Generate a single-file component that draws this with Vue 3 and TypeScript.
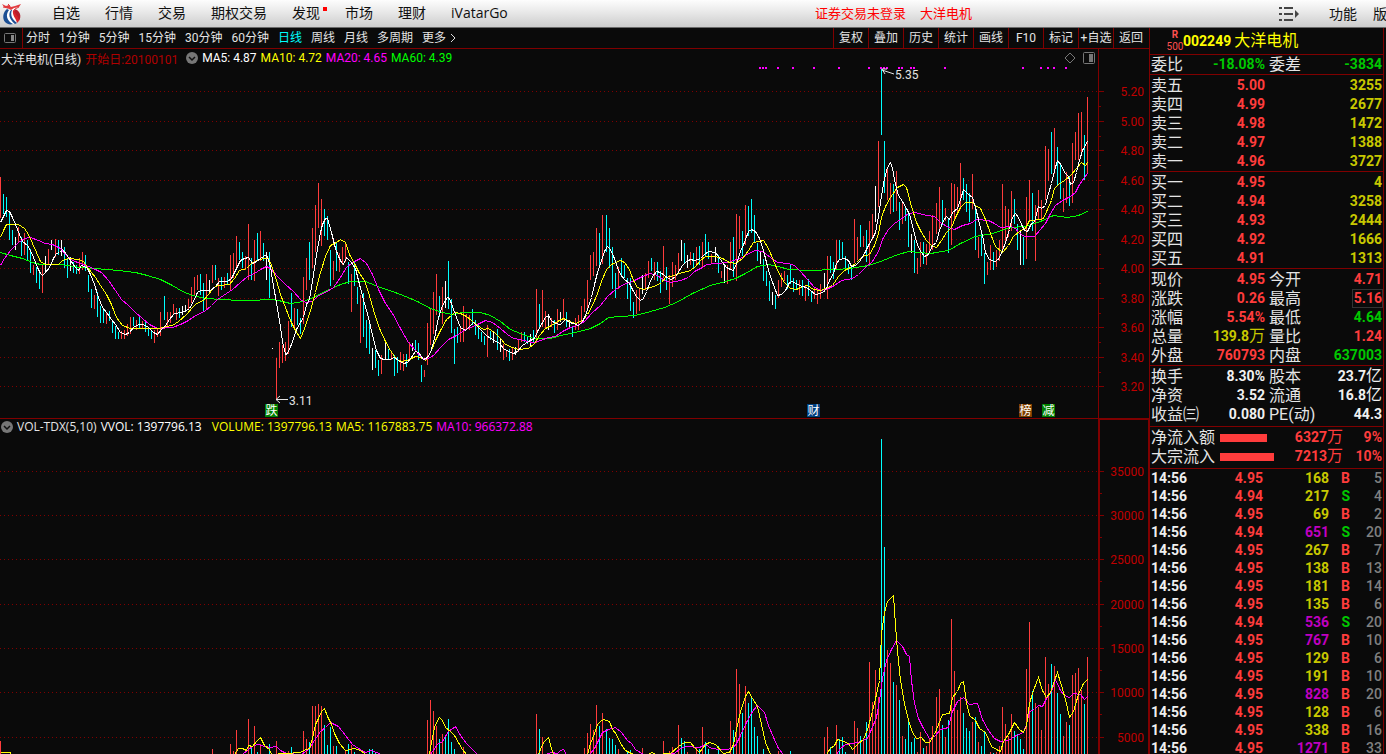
<script setup lang="ts">
type Tone = 'red' | 'green' | 'yellow' | 'purple' | 'white' | 'gray'
interface Bar { x: number; top: number; bottom: number; tone: string }

const navItems = ['自选', '行情', '交易', '期权交易', '发现', '市场', '理财', 'iVatarGo']
const periods = ['分时', '1分钟', '5分钟', '15分钟', '30分钟', '60分钟', '日线', '周线', '月线', '多周期']
const tools = ['复权', '叠加', '历史', '统计', '画线', 'F10', '标记', '+自选', '返回']

/* Daily bars: each run starts at x and advances three units per day; c = fall, r = rise, w = flat */
const runs: [number, string][] = [
  [0, 'r177-218 c194-214 c197-217 c211-240 c230-245 w237-250 r227-242 c237-256 r233-255 c240-260 c249-273 r265-275 c267-283 c272-289 r264-293 w256-272 r249-265 w240-250'],
  [55, 'r239-257 c240-255 w240-256 c247-268 c258-278 w257-271 c262-273 c265-274 r258-274 r252-270 c255-271 c275-292 c289-308 r295-309 c292-317 c306-323 c308-323 r312-324 c311-321 c321-333 c326-339 c332-339 r331-339 r330-339 r324-336 r317-334 c317-326 r320-330 c315-329 r321-329 c322-332 c327-336 c331-339 r330-343 r328-337 r312-336'],
  [164, 'c296-320 r312-326 r312-323 r304-314 r308-320 c308-318 w306-315 w305-312 r299-310 r287-303 r277-295 r275-290 c274-295 c283-311 r274-310 w280-293 r265-283 c265-280 r278-296 c277-290 r277-288 c273-284 r255-290 r253-278 r236-269 c242-260 c252-268 r256-270 r224-280 c258-280 r240-281 c233-260 r231-261 c243-261 w252-280 c252-298 w348-349'],
  [276, 'r358-399 r342-368 r345-363 r342-361 r321-354 c293-327 r308-330 c309-325 c318-334 r277-324 r258-290 c242-280 r228-268 r205-252 r183-228 r199-246 c209-236 c216-240 c250-286 r261-280 c243-271 r253-272 r247-265 r243-262 c262-284 r274-312 c262-286 c287-304 r295-343 c293-337 c320-348 c321-354 w348-370 c350-368 c360-376 r355-374'],
  [385, 'w342-359 c349-360 r352-360 c355-376 c357-373 r352-370 r354-371 c354-367 r342-360 w343-351 c340-350 c343-360 c365-382 r370-377 r323-365 r308-345 r292-334 r274-315 c296-317 r287-324 w281-308 c261-309 c299-333 c329-364 c327-343 r328-342 r306-342 r314-330 r315-330 c309-325 c320-335 c325-339 c332-342 c336-345 r325-357 c331-340 w332-343'],
  [497, 'c329-350 w338-352 r344-360 r350-357 c349-361 r347-360 w347-355 r340-352 r332-342 c332-342 c336-344 w334-346 c330-342 r289-343 c304-328 r290-327 r311-329 w314-330 r318-327 c320-333 r309-330 w312-322 r299-320 c312-327 w320-327 c326-337 r318-330 r315-330 r306-323 r299-312 r280-310 r255-280 r252-276 r228-266 c233-267 r215-264'],
  [606, 'c215-252 c228-268 c247-289 c273-298 r267-289 c258-277 c265-278 c278-299 c278-311 c302-318 r290-314 r288-311 w275-294 r273-290 r261-278 c258-271 r262-280 c262-281 c271-293 r246-278 c267-290 r275-304 r262-287 r265-280 r253-273 w240-261 c243-264 w255-268 r252-265 c253-268 r247-264 c246-265 r242-268 c234-257 c242-259 r254-264'],
  [715, 'w247-262 c255-273 r271-278 w266-283 r265-284 r242-270 c237-277 r214-281 r216-249 c231-256 r205-245 c206-236 c199-233 c215-242 c243-261 w252-264 c259-281 c271-286 c281-301 w292-305 c295-309 r280-298 r273-287 r271-281 c275-289 c265-284 c278-292 c280-290 r280-295 c280-296 r285-301 c279-296 c291-302 r287-299 r288-304 r284-299'],
  [824, 'w273-291 r256-299 c256-273 c262-279 r240-269 c240-260 c242-259 c256-269 c264-274 c267-280 r219-263 r237-260 c225-247 r236-247 c230-262 r221-264 r214-240 w186-222 r141-207 c68-135 c141-193 r169-200 r183-214 c184-212 r171-211 c202-230 r202-224 c206-221 c212-247 w234-253 c240-273 r258-274 r242-267 c242-264 r244-265 r231-253 r215-250'],
  [936, 'r203-234 r187-232 c200-225 r208-221 c218-253 r183-245 r184-221 r187-215 r163-207 c178-200 c184-212 c193-222 r174-209 c206-250 r237-258 c232-256 c253-284 r262-275 r245-270 c252-270 r250-267 r240-261 r184-253 r206-243 r209-237 r191-231 c199-224 c224-250 w230-265 c237-265 r197-259 r180-221 c193-231 r205-261 r190-220 r200-219'],
  [1045, 'r146-200 r149-181 c132-174 r128-174 c147-185 c164-199 r188-212 r172-203 c176-206 r143-203 r132-160 r113-160 r112-152 c135-180 r97-174'],
]
const priceBars: Bar[] = runs.flatMap(([x, text]) =>
  text.split(' ').map((t, i) => {
    const [top, bottom] = t.slice(1).split('-').map(Number)
    return { x: x + i * 3, top, bottom, tone: t[0] }
  }))

const volumeText = 'r0:741 r212:749 r230:744 r233:751 r236:730 r248:719 c251:748 r254:726 c257:752 r260:744 c269:744 r276:741 r288:751 c291:747 r303:731 r306:739 c309:742 r312:706 r315:706 r318:704 r321:706 c324:725 c327:745 c330:727 r333:746 c336:746 r345:751 c348:744 r351:745 c354:752 c369:749 c372:749 c375:752 r427:720 r430:700 r433:711 r436:726 c439:739 r442:734 c445:737 c448:719 c451:742 c454:749 r463:747 r536:714 c539:729 r542:737 r584:748 r587:733 r590:724 r593:730 r596:705 c599:726 r602:713 c606:729 c609:738 c612:739 c615:745 r618:749 c627:752 c630:750 r642:748 r663:741 r669:751 r672:747 r678:725 c681:738 c684:741 r687:752 r696:747 c699:749 r702:727 c705:742 c708:749 c718:746 r730:721 c733:730 r736:669 r739:684 c742:713 r745:686 c748:703 c751:696 c754:727 c757:736 c763:749 r778:751 c790:751 r824:737 r827:727 c830:747 r836:725 c839:739 c842:737 c845:752 r854:721 r857:728 c860:736 r863:739 c866:722 r869:662 r872:702 r875:670 r878:697 c881:439 c884:547 r887:650 r890:663 c893:682 r896:685 c899:700 r902:736 c905:739 c908:719 c911:742 c914:738 r917:752 r920:732 c923:748 r926:746 r929:739 r932:726 r936:697 r939:689 c942:725 r945:737 c948:720 r951:619 r954:671 r957:710 r960:697 c963:713 c966:728 c969:731 r972:722 c975:717 r978:742 c981:746 c984:731 r990:752 c993:753 r996:752 r999:746 r1002:707 r1005:724 r1008:736 r1011:714 c1014:731 c1017:734 c1020:739 c1023:749 r1026:669 r1029:622 c1032:691 r1035:703 r1038:707 r1041:730 r1045:657 r1048:684 c1051:664 r1054:666 c1057:693 c1060:714 r1063:736 r1066:722 c1069:725 r1072:675 r1075:673 r1078:668 r1081:690 c1084:704 r1087:657'
const volumeBars: Bar[] = volumeText.split(' ').map(t => {
  const [x, top] = t.slice(1).split(':').map(Number)
  return { x, top, bottom: 756, tone: t[0] }
})

const priceLines = [
  { tone: 'ma60', points: '0,252 10,255 22,258 32,262 40,264 60,264 80,267 95,268 118,270 135,272 147,275 160,279 172,285 182,291 192,295 205,298 222,299 238,300 250,300 270,299 278,300 290,303 303,301 315,296 327,290 340,284 350,281 365,281 380,287 392,291 405,296 417,301 430,308 442,312 452,314 462,312 480,312 490,315 500,321 510,329 520,333 533,338 550,338 560,335 575,332 590,328 600,323 608,317 620,316 635,315 650,311 664,307 678,301 692,293 710,285 725,281 735,278 745,273 757,266 768,264 778,266 788,269 808,270 835,269 850,268 868,265 880,261 895,255 908,251 930,253 948,250 960,243 975,236 992,233 1010,227 1025,226 1040,221 1053,215 1067,217 1078,215 1087,211' },
  { tone: 'ma20', points: '0,265 4,258 10,250 18,242 24,238 30,237 38,240 45,243 52,244 60,248 66,255 72,260 80,263 88,266 95,269 101,272 108,280 115,290 121,299 128,305 135,312 142,318 149,324 157,328 172,327 180,324 188,320 195,315 204,311 211,305 217,299 223,295 232,289 240,282 247,276 254,273 260,269 266,266 270,268 277,276 285,284 293,291 300,299 305,302 312,301 318,295 325,292 333,287 340,277 346,267 352,262 360,258 366,263 372,274 378,289 385,303 392,313 400,328 408,342 415,350 422,358 426,359 433,355 440,347 448,339 456,335 465,329 475,325 485,320 492,322 500,328 507,334 513,338 520,339 527,341 533,342 540,340 548,337 555,336 562,331 570,327 577,325 584,321 592,312 600,305 607,296 615,289 623,284 632,281 642,276 650,273 657,275 664,280 670,282 680,280 688,277 694,271 702,267 706,264 716,263 728,262 733,260 740,258 748,253 755,250 762,251 770,257 777,262 788,263 794,265 800,271 808,280 814,287 821,290 828,288 834,285 841,280 852,278 858,274 866,266 872,261 878,251 882,239 888,229 894,223 900,219 908,213 915,212 926,215 934,216 940,222 948,227 954,229 962,225 970,223 976,219 988,220 994,223 1000,227 1010,226 1015,228 1018,232 1024,236 1034,236 1040,229 1045,223 1050,213 1055,205 1062,200 1070,196 1075,192 1079,184 1084,177 1087,173' },
  { tone: 'ma10', points: '0,237 3,230 6,224 18,224 24,228 28,234 32,243 36,252 40,261 45,264 58,264 62,260 68,258 78,259 83,261 87,267 91,272 95,277 100,285 106,294 111,304 116,317 122,325 130,328 150,328 159,328 166,326 172,325 178,321 186,314 192,307 196,303 203,300 208,294 213,287 218,285 229,284 234,278 239,270 246,268 251,263 257,260 263,258 268,258 271,265 276,280 280,294 285,307 290,320 295,330 300,338 304,328 310,310 315,292 320,272 325,256 330,245 336,242 340,239 345,242 349,254 354,263 359,273 364,280 368,292 374,313 379,328 385,341 390,350 396,359 402,361 409,359 415,356 420,357 425,360 430,352 435,340 440,330 446,319 451,315 454,312 460,313 466,316 471,320 477,325 483,329 488,328 494,332 500,338 505,344 512,347 518,349 528,348 534,343 539,335 545,328 551,325 557,321 563,318 569,321 575,323 582,320 587,314 592,305 597,293 601,281 606,269 611,264 620,260 624,262 629,269 633,280 637,287 643,289 650,287 656,285 661,282 665,277 670,276 676,274 682,272 688,271 694,267 700,260 705,256 715,256 722,258 729,262 735,263 742,258 748,250 753,242 759,241 763,240 768,248 773,260 778,272 784,282 790,288 796,289 802,286 807,285 813,289 820,290 827,287 832,285 838,276 844,270 850,267 856,262 862,256 869,254 874,245 878,233 881,217 885,206 890,197 897,187 903,184 906,187 911,206 916,222 921,232 926,240 931,245 936,247 941,240 946,232 951,227 955,217 960,207 965,202 972,202 975,205 980,208 985,219 990,233 995,246 1002,252 1008,245 1013,236 1020,230 1025,228 1029,220 1040,219 1043,218 1047,209 1051,200 1054,188 1058,184 1064,180 1070,175 1076,168 1081,162 1085,165 1087,162' },
  { tone: 'ma5', points: '0,222 6,210 9,211 12,217 15,224 19,234 22,241 27,245 30,250 33,257 37,267 40,273 42,275 45,272 49,267 53,258 56,253 59,252 62,249 66,254 70,260 75,267 78,270 81,265 84,266 87,268 90,274 94,284 98,297 102,307 106,312 111,319 115,324 120,332 125,334 129,332 133,327 138,324 143,324 148,327 153,332 157,334 161,329 165,325 169,319 174,313 181,312 186,310 189,308 193,301 197,292 200,290 210,290 215,286 219,281 227,281 231,278 236,268 240,260 244,258 248,257 252,263 256,261 260,258 266,254 270,266 273,286 276,302 280,327 282,341 285,354 287,353 291,344 296,329 300,322 303,317 306,304 309,299 312,281 316,254 320,232 322,224 325,218 327,218 331,232 335,248 338,256 341,262 343,264 346,257 350,261 355,268 360,288 364,303 368,317 372,335 376,350 380,358 384,359 389,359 394,357 398,360 403,363 407,362 410,358 415,351 418,352 423,359 427,357 430,352 434,338 438,317 441,308 444,301 447,297 449,298 452,306 456,317 460,327 465,330 469,326 473,322 477,326 482,331 487,336 494,340 499,343 503,348 508,351 513,353 517,351 522,345 528,341 534,338 537,331 541,324 545,317 548,315 551,320 555,323 560,324 565,319 569,322 573,323 578,325 582,321 585,315 588,306 591,297 594,284 597,272 601,260 604,251 607,246 610,249 614,258 617,267 620,274 624,279 629,283 632,289 636,296 640,300 643,298 646,291 649,283 652,276 656,271 660,272 664,275 668,278 671,279 675,276 679,270 682,265 686,261 690,259 694,260 700,258 704,254 708,251 715,252 718,256 722,262 726,267 730,269 733,270 736,263 740,251 744,242 748,231 751,229 755,231 759,238 763,250 767,266 770,276 774,287 777,295 781,294 785,290 789,282 792,281 797,284 802,286 806,287 810,290 815,294 820,293 825,290 829,280 833,273 836,263 839,259 844,258 848,260 851,266 855,265 859,261 864,253 868,245 872,238 875,232 878,216 881,195 884,178 887,167 890,162 892,168 895,184 898,195 902,201 906,208 909,214 912,225 915,238 918,247 921,252 924,256 928,254 932,245 936,242 939,230 943,220 946,216 949,219 952,212 957,208 960,199 963,189 968,194 972,197 975,207 978,219 982,235 985,252 989,259 994,261 997,260 1001,253 1005,242 1009,229 1012,217 1015,213 1018,217 1021,224 1024,230 1027,231 1031,223 1034,222 1038,206 1041,208 1045,205 1048,193 1051,183 1054,170 1057,160 1061,165 1064,172 1068,176 1070,184 1073,182 1076,172 1079,160 1082,150 1087,141' },
]

const volumeLines = [
  { tone: 'ma20', points: '242,754 248,749 253,745 258,744 264,746 270,747 276,746 280,750 286,753 301,754 309,748 314,740 320,731 325,727 330,722 338,726 345,735 352,744 358,748 365,752 371,750 381,754 381,758 430,758 430,754 437,744 442,741 448,731 455,726 460,735 466,743 477,754 477,758 545,758 545,754 551,752 557,753 560,750 563,749 566,754 566,758 590,758 590,753 594,748 598,740 602,732 608,729 615,727 621,732 627,740 631,743 635,749 643,754 643,758 665,758 665,754 674,753 680,748 686,746 699,747 705,744 711,748 720,749 728,749 735,745 740,735 746,722 752,711 757,705 764,712 768,725 773,737 778,748 783,754 783,758 836,758 836,754 840,748 845,744 858,742 862,740 867,738 871,729 876,717 879,700 882,678 886,660 891,649 896,640 902,646 906,654 909,656 911,680 914,703 918,718 923,728 929,738 934,736 940,729 948,727 952,711 957,701 963,697 969,704 977,703 982,719 988,730 994,738 1000,741 1008,740 1014,736 1023,732 1026,724 1029,711 1034,709 1038,705 1042,706 1046,698 1051,691 1055,679 1060,690 1064,695 1069,697 1073,693 1080,694 1084,699 1087,696' },
  { tone: 'ma10', points: '0,752 10,752 12,758 233,758 234,754 238,748 242,748 246,750 248,745 252,746 256,741 260,737 264,745 269,749 271,754 285,753 300,752 303,750 309,748 312,738 315,724 318,718 321,711 324,708 327,716 331,724 334,733 339,743 345,750 354,748 360,750 364,753 366,758 429,758 429,754 431,742 434,727 437,720 439,717 442,720 445,727 450,731 454,735 458,742 462,749 466,754 467,758 537,758 538,754 541,746 544,741 548,737 551,748 553,754 554,758 586,758 587,754 590,743 594,733 597,724 600,721 603,719 609,721 612,729 616,734 620,743 625,750 631,753 640,757 648,754 651,752 656,754 670,753 678,746 684,742 690,742 694,747 699,752 705,744 709,742 715,744 723,753 729,752 733,744 736,729 740,711 745,696 748,691 752,698 757,706 761,724 765,742 770,754 771,758 826,758 827,752 830,748 834,745 837,739 843,741 848,743 852,749 858,743 863,739 867,729 872,711 876,694 879,680 881,633 884,612 887,601 893,595 895,625 897,651 900,680 904,703 908,720 912,732 916,738 921,737 925,742 929,742 934,734 938,724 942,714 949,713 952,697 957,691 960,683 963,681 966,702 969,715 975,720 979,728 985,732 988,739 991,746 996,749 1000,751 1003,741 1008,734 1014,722 1019,729 1023,732 1026,725 1029,703 1033,690 1038,677 1042,690 1046,697 1050,692 1054,680 1057,672 1061,685 1066,703 1069,717 1073,711 1078,694 1083,683 1087,679' },
]

const priceScale = [91, 121, 150, 180, 209, 239, 268, 298, 327, 357, 386].map((y, i) => ({ y, label: (5.2 - i * 0.2).toFixed(2) }))
const volumeScale = [471, 515, 559, 604, 648, 692, 737].map((y, i) => ({ y, label: String(35000 - i * 5000) }))
const newsDots = [759, 762, 765, 777, 792, 813, 838, 868, 880, 883, 886, 898, 901, 910, 913, 944, 1022, 1040, 1047, 1053, 1065]
const eventMarks = [
  { x: 265, text: '跌', fill: '#008000' },
  { x: 807, text: '财', fill: '#003f7f' },
  { x: 1019, text: '榜', fill: '#7f3f00' },
  { x: 1042, text: '减', fill: '#008000' },
]

const asks = [['卖五', '5.00', '3255'], ['卖四', '4.99', '2677'], ['卖三', '4.98', '1472'], ['卖二', '4.97', '1388'], ['卖一', '4.96', '3727']]
const bids = [['买一', '4.95', '4'], ['买二', '4.94', '3258'], ['买三', '4.93', '2444'], ['买四', '4.92', '1666'], ['买五', '4.91', '1313']]
interface Quote { a: string; av: string; au?: string; at: Tone; b: string; bv: string; bu?: string; bt: Tone; boxed?: boolean }
const ratio: Quote[] = [{ a: '委比', av: '-18.08%', at: 'green', b: '委差', bv: '-3834', bt: 'green' }]
const quotes: Quote[] = [
  { a: '现价', av: '4.95', at: 'red', b: '今开', bv: '4.71', bt: 'red' },
  { a: '涨跌', av: '0.26', at: 'red', b: '最高', bv: '5.16', bt: 'red', boxed: true },
  { a: '涨幅', av: '5.54%', at: 'red', b: '最低', bv: '4.64', bt: 'green' },
  { a: '总量', av: '139.8', au: '万', at: 'yellow', b: '量比', bv: '1.24', bt: 'red' },
  { a: '外盘', av: '760793', at: 'red', b: '内盘', bv: '637003', bt: 'green' },
]
const basics: Quote[] = [
  { a: '换手', av: '8.30%', at: 'white', b: '股本', bv: '23.7', bu: '亿', bt: 'white' },
  { a: '净资', av: '3.52', at: 'white', b: '流通', bv: '16.8', bu: '亿', bt: 'white' },
  { a: '收益㈢', av: '0.080', at: 'white', b: 'PE(动)', bv: '44.3', bt: 'white' },
]
const quoteGroups = [quotes, basics]
const flows = [
  { label: '净流入额', amount: '6327', pct: '9%', bar: 47 },
  { label: '大宗流入', amount: '7213', pct: '10%', bar: 54 },
]
const ticks: [string, number, string, number][] = [
  ['4.95', 168, 'B', 5], ['4.94', 217, 'S', 4], ['4.95', 69, 'B', 2], ['4.94', 651, 'S', 20],
  ['4.95', 267, 'B', 7], ['4.95', 138, 'B', 13], ['4.95', 181, 'B', 14], ['4.95', 135, 'B', 6],
  ['4.94', 536, 'S', 20], ['4.95', 767, 'B', 10], ['4.95', 129, 'B', 6], ['4.95', 191, 'B', 10],
  ['4.95', 828, 'B', 20], ['4.95', 128, 'B', 6], ['4.95', 338, 'B', 16], ['4.95', 1271, 'B', 33],
]
</script>

<template>
  <div class="app">
    <header class="titlebar">
      <svg class="logo" viewBox="0 0 24 26" aria-hidden="true">
        <circle cx="12" cy="15" r="8" fill="#fff" />
        <path d="M7 8C3 11 2 17 5 21c2 2 5 3 8 2C7 20 5 14 9 9z" fill="#1c4f94" />
        <path d="M11 9c-3 4-2 9 4 14l2-1C12 18 10 14 12 9z" fill="#1c4f94" />
        <path d="M13 9c7 2 9 9 4 13-1-5-5-7-4-13z" fill="#d8232a" />
        <path d="M14 8c6 1 8 7 5 12 0-5-5-7-5-12z" fill="#b81d2b" />
        <path d="M2 3l4 2 3-1 2 2 4-1 3-1 3-1-2 3-5 1-3 2-4-2-3-1z" fill="#e23b3f" />
        <path d="M3 6l5 1M15 8l4-2M8 3l2 2" stroke="#e23b3f" stroke-width="1" />
      </svg>
      <nav class="nav">
        <a v-for="n in navItems" :key="n" href="#" :class="{ fresh: n === '发现' }">{{ n }}</a>
      </nav>
      <div class="account"><a href="#">证券交易未登录</a><a href="#">大洋电机</a></div>
      <div class="sys">
        <button type="button" aria-label="菜单" class="menu-btn">
          <svg width="20" height="14" viewBox="0 0 20 14"><path d="M0 1h3M5 1h9M0 7h3M5 7h9M0 13h3M5 13h9" stroke="#444" stroke-width="2" /><path d="M16 3l4 4-4 4z" fill="#444" /></svg>
        </button>
        <button type="button">功能</button>
        <button type="button">版</button>
      </div>
    </header>

    <div class="body">
      <main class="main">
        <div class="toolbar">
          <button type="button" class="pane-btn" aria-label="面板">
            <svg width="12" height="10" viewBox="0 0 12 10"><rect x=".5" y=".5" width="11" height="9" rx="1" fill="none" stroke="#777" /><rect x="7" y="2" width="3" height="6" fill="#888" /></svg>
          </button>
          <div class="periods">
            <button v-for="p in periods" :key="p" type="button" :class="{ on: p === '日线' }">{{ p }}</button>
            <button type="button" class="more">更多<svg width="6" height="10" viewBox="0 0 6 10"><path d="M1 1l4 4-4 4" fill="none" stroke="#ddd" /></svg></button>
          </div>
          <div class="tools"><button v-for="t in tools" :key="t" type="button">{{ t }}</button></div>
        </div>

        <section class="price">
          <div class="info">
            <div class="legend">
              <span class="t-name">大洋电机(日线)</span>
              <span class="t-start">开始日:20100101</span>
              <svg class="drop" width="12" height="12" viewBox="0 0 12 12"><circle cx="6" cy="6" r="6" fill="#777" /><path d="M3 5l3 3 3-3" fill="none" stroke="#111" stroke-width="1.5" /></svg>
              <span class="l-white">MA5: 4.87</span>
              <span class="l-yellow">MA10: 4.72</span>
              <span class="l-magenta">MA20: 4.65</span>
              <span class="l-green">MA60: 4.39</span>
              <svg class="corner" width="31" height="12" viewBox="0 0 31 12"><path d="M6 1l5 5-5 5-5-5z" fill="none" stroke="#777" /><rect x="19.5" y=".5" width="11" height="11" rx="1" fill="none" stroke="#777" /><rect x="25" y="2" width="4" height="8" fill="#777" /></svg>
            </div>
          </div>
          <svg class="plot" viewBox="0 67 1149 351" preserveAspectRatio="xMaxYMin meet" role="img" aria-label="日线走势">
            <g class="grid"><line v-for="s in priceScale" :key="s.y" x1="0" x2="1098" :y1="s.y + 0.5" :y2="s.y + 0.5" /></g>
            <g><rect v-for="(b, i) in priceBars" :key="i" :class="'b-' + b.tone" :x="b.x" :y="b.top" width="1" :height="b.bottom - b.top" /></g>
            <g transform="translate(.5 .5)"><polyline v-for="l in priceLines" :key="l.tone" class="ma" :class="l.tone" :points="l.points" /></g>
            <rect v-for="d in newsDots" :key="d" class="dot" :x="d" y="67" width="2" height="2" />
            <path class="arrow" d="M894 74L882 70M887 69h-5l3 5M288 399.500h-12M280 396l-4 3.500 4 3.500" />
            <text class="note" x="895" y="79">5.35</text>
            <text class="note" x="289" y="405">3.11</text>
            <g v-for="m in eventMarks" :key="m.x">
              <rect :x="m.x" y="404" width="13" height="13" :fill="m.fill" />
              <text class="mark" :x="m.x + 0.5" y="415">{{ m.text }}</text>
            </g>
            <g class="axis">
              <rect x="1098" y="67" width="1" height="351" />
              <template v-for="(s, i) in priceScale" :key="s.y">
                <rect x="1099" :y="s.y" width="5" height="1" />
                <rect v-if="i < 10" x="1099" :y="s.y + 15" width="2" height="1" />
                <text x="1144" :y="s.y + 5">{{ s.label }}</text>
              </template>
            </g>
          </svg>
        </section>

        <section class="volume">
          <div class="info">
            <div class="legend">
              <svg class="drop" width="12" height="12" viewBox="0 0 12 12"><circle cx="6" cy="6" r="6" fill="#777" /><path d="M3 5l3 3 3-3" fill="none" stroke="#111" stroke-width="1.5" /></svg>
              <span class="t-name">VOL-TDX(5,10)</span>
              <span class="l-white vvol">VVOL: 1397796.13</span>
              <span class="l-yellow">VOLUME: 1397796.13</span>
              <span class="l-yellow">MA5: 1167883.75</span>
              <span class="l-magenta">MA10: 966372.88</span>
            </div>
            <div class="axis-top"></div>
          </div>
          <svg class="plot" viewBox="0 436 1149 318" preserveAspectRatio="xMaxYMin meet" role="img" aria-label="成交量">
            <g class="grid"><line v-for="s in volumeScale" :key="s.y" x1="0" x2="1098" :y1="s.y + 0.5" :y2="s.y + 0.5" /></g>
            <g><rect v-for="b in volumeBars" :key="b.x" :class="'b-' + b.tone" :x="b.x" :y="b.top" width="1" :height="b.bottom - b.top" /></g>
            <g transform="translate(.5 .5)"><polyline v-for="l in volumeLines" :key="l.tone" class="ma" :class="l.tone" :points="l.points" /></g>
            <g class="axis">
              <rect x="1098" y="436" width="2" height="318" />
              <rect x="1148" y="436" width="1" height="318" />
              <template v-for="(s, i) in volumeScale" :key="s.y">
                <rect x="1100" :y="s.y" width="4" height="1" />
                <rect v-if="i < 6" x="1100" :y="s.y + 22" width="2" height="1" />
                <text x="1144" :y="s.y + 5">{{ s.label }}</text>
              </template>
            </g>
          </svg>
        </section>
      </main>

      <aside class="side">
        <h1 class="stock"><span class="tag"><b>R</b><span>500</span></span><b class="code">002249</b><span>大洋电机</span></h1>
        <table class="quotes">
          <tbody>
            <tr v-for="q in ratio" :key="q.a">
              <th>{{ q.a }}</th><td :class="q.at">{{ q.av }}</td><th class="second">{{ q.b }}</th><td :class="q.bt">{{ q.bv }}</td>
            </tr>
          </tbody>
        </table>
        <table v-for="(book, k) in [asks, bids]" :key="k" class="book five">
          <tbody>
            <tr v-for="r in book" :key="r[0]"><th>{{ r[0] }}</th><td class="red">{{ r[1] }}</td><td class="yellow">{{ r[2] }}</td></tr>
          </tbody>
        </table>
        <table v-for="(group, k) in quoteGroups" :key="'q' + k" class="quotes" :class="k === 0 ? 'five' : 'three'">
          <tbody>
            <tr v-for="q in group" :key="q.a">
              <th>{{ q.a }}</th>
              <td :class="q.at">{{ q.av }}<span v-if="q.au" class="unit">{{ q.au }}</span></td>
              <th class="second">{{ q.b }}</th>
              <td :class="q.bt"><span v-if="q.boxed" class="frame">{{ q.bv }}</span><template v-else>{{ q.bv }}</template><span v-if="q.bu" class="unit">{{ q.bu }}</span></td>
            </tr>
          </tbody>
        </table>
        <table class="flows">
          <tbody>
            <tr v-for="f in flows" :key="f.label">
              <th>{{ f.label }}</th>
              <td class="bar-cell"><div class="bar" :style="{ width: f.bar + 'px' }"></div></td>
              <td class="red">{{ f.amount }}<span class="unit">万</span></td>
              <td class="red">{{ f.pct }}</td>
            </tr>
          </tbody>
        </table>
        <table class="tape">
          <tbody>
            <tr v-for="(t, i) in ticks" :key="i">
              <td class="time">14:56</td>
              <td class="red">{{ t[0] }}</td>
              <td :class="t[1] >= 500 ? 'purple' : 'yellow'">{{ t[1] }}</td>
              <td :class="t[2] === 'B' ? 'red' : 'green'">{{ t[2] }}</td>
              <td class="gray">{{ t[3] }}</td>
            </tr>
          </tbody>
        </table>
      </aside>
    </div>
  </div>
</template>

<style>
body { margin: 0; background: #0a0a0a; }
</style>

<style scoped>
.app {
  display: flex;
  flex-direction: column;
  height: 100vh;
  overflow: hidden;
  color: #e4e4e4;
  background: #0a0a0a;
  font-family: Roboto, "Noto Sans CJK SC", sans-serif;
  font-size: 12px;
}
button { padding: 0; border: 0; background: none; color: inherit; font: inherit; white-space: nowrap; }
a { color: inherit; text-decoration: none; }

.titlebar {
  display: flex;
  flex: none;
  align-items: center;
  height: 27px;
  border-bottom: 1px solid #6a6a6a;
  background: linear-gradient(#fdfdfd, #e6e6e6 50%, #cccccc);
  color: #101010;
  font-family: "Open Sans", "Noto Sans CJK SC", sans-serif;
  font-size: 14px;
  line-height: 24px;
  white-space: nowrap;
  overflow: hidden;
}
.logo { width: 24px; height: 26px; margin-right: 28px; }
.nav { display: flex; flex: 0 0 763px; gap: 25px; padding-bottom: 2px; }
.nav a { position: relative; }
.fresh::after { content: ""; position: absolute; top: 6px; right: -7px; width: 4px; height: 4px; background: #f00; }
.account { display: flex; gap: 14px; padding-bottom: 2px; color: #f00; font-size: 13px; }
.sys { display: flex; flex: none; align-items: center; gap: 16px; margin-left: auto; margin-right: -1px; }
.menu-btn { display: flex; margin-right: 14px; }

.body { display: flex; flex: 1; min-height: 0; }
.main { display: flex; flex: 1; flex-direction: column; min-width: 0; border-right: 1px solid #800000; }

.toolbar { display: flex; flex: none; height: 20px; border-bottom: 1px solid #800000; line-height: 21px; }
.pane-btn { display: flex; align-items: center; box-sizing: content-box; width: 18px; padding-left: 4px; border-right: 1px solid #800000; }
.periods { display: flex; gap: 9px; padding-left: 3px; }
.periods .on { color: #00ffff; }
.more { display: flex; align-items: center; gap: 4px; }
.tools { display: grid; grid-template-columns: repeat(9, 35px); margin-left: auto; margin-right: 1px; }
.tools button { border-left: 1px solid #800000; }

.price { flex: none; border-bottom: 1px solid #800000; }
.info { display: flex; }
.legend { display: flex; flex: 1; align-items: center; gap: 4px; height: 18px; padding-left: 1px; white-space: nowrap; }
.price .legend { border-right: 1px solid #800000; margin-right: 50px; }
.price .drop { margin-left: 4px; }
.corner { margin-left: auto; margin-right: 3px; }
.drop { flex: none; }
.t-name { color: #e4e4e4; }
.t-start { color: #b00000; }
.l-white { color: #ffffff; }
.l-yellow { color: #ffff00; }
.l-magenta { color: #ff00ff; }
.l-green { color: #00ff00; }
.volume { flex: 1; min-height: 0; overflow: hidden; }
.volume .legend { height: 15px; padding-bottom: 2px; font-family: "Open Sans", sans-serif; }
.vvol { margin-right: 6px; }
.axis-top { width: 48px; border: solid #800000; border-width: 1px 1px 0 2px; }

.plot { display: block; width: 100%; }
.grid line { stroke: #800000; stroke-width: 1; stroke-dasharray: 1 3; shape-rendering: crispEdges; }
.b-r { fill: #ff3c3c; }
.b-c { fill: #00ffff; }
.b-w { fill: #ffffff; }
.ma { fill: none; stroke-width: 1; shape-rendering: crispEdges; }
.ma5 { stroke: #ffffff; }
.ma10 { stroke: #ffff00; }
.ma20 { stroke: #ff00ff; }
.ma60 { stroke: #00ff00; }
.dot { fill: #ff00ff; }
.arrow { fill: none; stroke: #e4e4e4; }
.note { fill: #e4e4e4; font-size: 12px; }
.mark { fill: #fff; font-size: 12px; }
.axis rect { fill: #800000; }
.axis text { fill: #c00000; font-size: 12px; text-anchor: end; }

.side { flex: none; box-sizing: border-box; width: 234px; margin-right: 2px; border-right: 1px solid #800000; font-size: 14px; overflow: hidden; }
.stock { display: flex; align-items: center; height: 26px; margin: 0; padding-left: 17px; border-bottom: 1px solid #800000; color: #ffff00; font-size: 16px; font-weight: 400; line-height: 24px; }
.stock .code { margin-right: 3px; font-size: 14px; }
.tag { display: flex; flex-direction: column; align-items: center; width: 16px; color: #ff5050; font-size: 10px; line-height: 12px; }

table { display: block; border-bottom: 1px solid #800000; padding: 0 1px; }
tbody { display: block; }
tr { display: grid; line-height: 19px; }
th, td { height: 19px; padding: 0; white-space: nowrap; }
th { font-size: 16px; font-weight: 400; text-align: left; }
td { font-weight: 700; text-align: right; }
.five { padding-top: 1px; }
.three { padding-top: 1px; padding-bottom: 2px; }
.quotes tr { grid-template-columns: 48px 66px 52px 1fr; }
.second { padding-left: 4px; }
.book tr { grid-template-columns: 48px 66px 1fr; }
.unit { font-size: 16px; font-weight: 400; line-height: 16px; }
.frame { display: inline-block; padding-left: 1px; outline: 1px solid #333; line-height: 17px; }
.flows { padding: 1px 1px 2px; }
.flows tr { grid-template-columns: 69px 56px 67px 1fr; align-items: center; }
.bar-cell { display: flex; align-items: center; }
.bar { height: 8px; background: #ff3c3c; }
.tape { border-bottom: 0; }
.tape tr { grid-template-columns: 48px 64px 66px 21px 1fr; line-height: 18px; }
.tape td { height: 18px; }
.tape .time { text-align: left; color: #f0f0f0; }
.tape .gray { font-weight: 500; }

.red { color: #ff3c3c; }
.green { color: #00c800; }
.yellow { color: #c8c800; }
.purple { color: #c000c0; }
.white { color: #f0f0f0; }
.gray { color: #808080; }
</style>
